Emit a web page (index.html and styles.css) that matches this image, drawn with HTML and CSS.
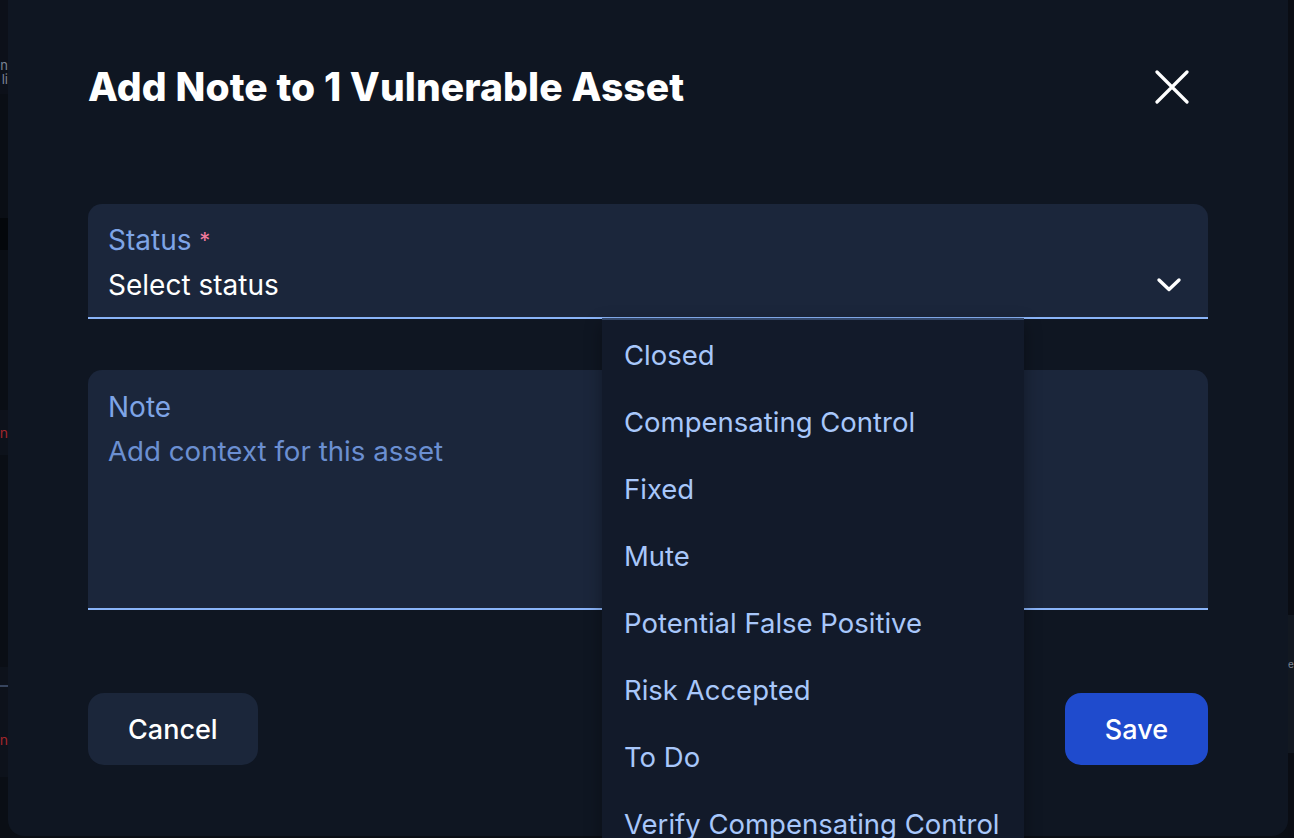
FILE: index.html
```html
<!DOCTYPE html>
<html lang="en">
<head>
<meta charset="utf-8">
<title>Add Note to 1 Vulnerable Asset</title>
<link rel="stylesheet" href="styles.css">
</head>
<body>
<div class="backdrop">
  <div class="strip strip-left">
    <div class="band b-top"></div>
    <div class="band b-text"><span class="frag grey">n</span><span class="frag grey">li</span></div>
    <div class="band b-plain b-h124"></div>
    <div class="band b-black"></div>
    <div class="band b-plain b-h160"></div>
    <div class="band b-row"><span class="frag red">n</span></div>
    <div class="band b-plain b-h212"></div>
    <div class="band b-row2"><div class="rule"></div><span class="frag red">n</span></div>
    <div class="band b-plain b-rest"></div>
  </div>
  <div class="page"></div>
  <div class="strip strip-right">
    <div class="band r-top"></div>
    <div class="band r-row"><span class="frag grey start">e</span></div>
    <div class="band r-rest"></div>
  </div>
</div>

<div class="modal" role="dialog" aria-labelledby="modal-title">
  <header class="modal-header">
    <h1 id="modal-title" class="modal-title">Add Note to 1 Vulnerable Asset</h1>
    <button class="close-btn" aria-label="Close">
      <svg width="34" height="34" viewBox="0 0 34 34" fill="none" stroke="#ffffff" stroke-width="3.2" stroke-linecap="round"><path d="M2 2 L32 32 M32 2 L2 32"/></svg>
    </button>
  </header>

  <div class="form">
    <div class="field field-select">
      <div class="field-label">Status <span class="req">*</span></div>
      <div class="field-row">
        <span class="field-value">Select status</span>
        <svg class="chevron" width="26" height="16" viewBox="0 0 26 16" fill="none" stroke="#ffffff" stroke-width="3.4" stroke-linecap="round" stroke-linejoin="round"><path d="M3 3 L13 12.5 L23 3"/></svg>
      </div>
      <ul class="menu">
        <li class="menu-item">Closed</li>
        <li class="menu-item">Compensating Control</li>
        <li class="menu-item">Fixed</li>
        <li class="menu-item">Mute</li>
        <li class="menu-item">Potential False Positive</li>
        <li class="menu-item">Risk Accepted</li>
        <li class="menu-item">To Do</li>
        <li class="menu-item">Verify Compensating Control</li>
      </ul>
    </div>

    <div class="field field-note">
      <div class="field-label">Note</div>
      <div class="field-placeholder">Add context for this asset</div>
    </div>
  </div>

  <footer class="modal-actions">
    <button class="btn btn-secondary">Cancel</button>
    <button class="btn btn-primary">Save</button>
  </footer>
</div>
</body>
</html>
```

FILE: styles.css
```css
* { box-sizing: border-box; }

html, body {
  margin: 0;
  padding: 0;
  width: 1294px;
  height: 838px;
  overflow: hidden;
  background: #0a0e15;
  font-family: Inter, "Noto Sans", sans-serif;
}

/* ---------- backdrop (app behind the dialog) ---------- */
.backdrop {
  display: grid;
  grid-template-columns: 8px 1fr 6px;
  height: 838px;
}
.strip {
  display: flex;
  flex-direction: column;
  overflow: hidden;
}
.band {
  display: flex;
  flex-direction: column;
  justify-content: center;
  align-items: flex-end;
  background: #0a0e15;
}
.b-top { height: 58px; background: #0c1019; }
.b-text { height: 36px; background: #0c1019; justify-content: flex-start; }
.b-h124 { height: 124px; }
.b-black { height: 32px; background: #04070b; }
.b-h160 { height: 160px; }
.b-row { height: 45px; background: #0d121b; }
.b-h212 { height: 212px; }
.b-row2 { height: 110px; background: #0d121b; justify-content: flex-start; }
.b-rest { flex: 1; }
.rule { width: 100%; height: 2px; background: #37455e; margin-top: 18px; margin-bottom: 46px; }

.r-top { height: 615px; background: #0a0d14; }
.r-row { height: 138px; background: #121821; align-items: flex-start; justify-content: flex-start; }
.r-rest { flex: 1; background: #0a0d14; }

.frag {
  font-size: 13px;
  line-height: 14px;
  display: block;
}
.grey { color: #7b8392; }
.red { color: #a3262c; font-size: 14px; }
.start { margin-top: 42px; font-size: 10px; }

/* ---------- modal ---------- */
.modal {
  position: absolute;
  left: 8px;
  top: -16px;
  width: 1280px;
  height: 852px;
  background: #0f1622;
  border-radius: 16px;
  padding: 79px 80px 0 80px;
  display: flex;
  flex-direction: column;
}

.modal-header {
  display: flex;
  align-items: center;
  justify-content: space-between;
  height: 48px;
}
.modal-title {
  margin: 0;
  color: #ffffff;
  font-family: Inter, sans-serif;
  font-weight: 800;
  font-size: 39px;
  line-height: 48px;
  letter-spacing: 0.1px;
}
.close-btn {
  width: 34px;
  height: 34px;
  padding: 0;
  margin-right: 19px;
  border: 0;
  background: transparent;
  display: flex;
}

.form {
  margin-top: 93px;
  display: flex;
  flex-direction: column;
  gap: 51px;
}

.field {
  background: #1b263b;
  border-radius: 14px 14px 0 0;
  border-bottom: 2px solid #8ab4f8;
  padding: 18px 26px 13px 20px;
  position: relative;
}
.field-select { height: 115px; }
.field-note { height: 240px; padding-top: 19px; }

.field-label {
  color: #7ea4e6;
  font-size: 28px;
  line-height: 36px;
  font-weight: 400;
}
.req { color: #f07a9c; font-size: 22px; vertical-align: top; }

.field-row {
  margin-top: 8px;
  height: 38px;
  display: flex;
  align-items: center;
  justify-content: space-between;
}
.field-value {
  color: #ffffff;
  font-size: 28px;
  line-height: 38px;
}
.chevron { margin-top: 0; }

.field-placeholder {
  margin-top: 7px;
  color: #6b8fd1;
  font-size: 27.7px;
  line-height: 38px;
}

/* ---------- dropdown menu ---------- */
.menu {
  position: absolute;
  left: 514px;
  top: calc(100% + 1px);
  width: 422px;
  margin: 0;
  padding: 1px 0 0 0;
  list-style: none;
  background: #121a2a;
  border-top: 2px solid #34486a;
  z-index: 5;
  box-shadow: 0 6px 16px rgba(0, 0, 0, 0.35);
}
.menu-item {
  height: 67px;
  display: flex;
  align-items: center;
  padding-left: 22px;
  color: #a8c7fa;
  font-size: 27.5px;
  white-space: nowrap;
}

/* ---------- actions ---------- */
.modal-actions {
  margin-top: 83px;
  display: flex;
  justify-content: space-between;
}
.btn {
  height: 72px;
  border: 0;
  border-radius: 16px;
  padding: 0 40px;
  font-family: Inter, sans-serif;
  font-size: 27px;
  font-weight: 500;
  color: #ffffff;
}
.btn-secondary { background: #1b263a; }
.btn-primary { background: #1f4bcd; }
```
